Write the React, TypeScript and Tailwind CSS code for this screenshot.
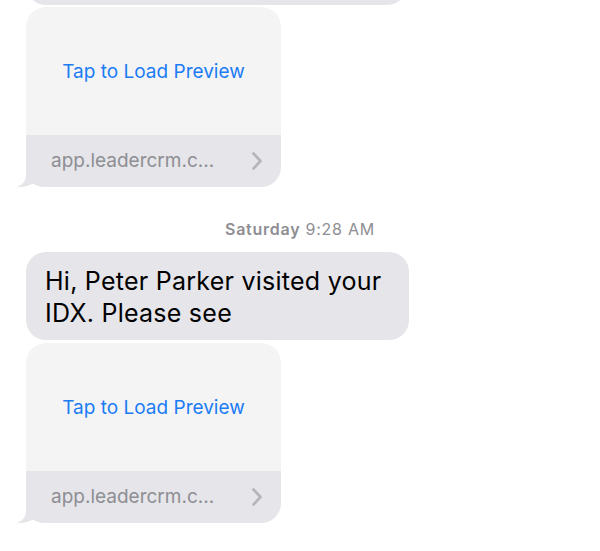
import React from "react";

const Chevron = () => (
  <svg width="12" height="20" viewBox="0 0 12 20" fill="none">
    <path
      d="M2.5 2.5 L9.5 10 L2.5 17.5"
      stroke="#b4b4b9"
      strokeWidth="2.6"
      strokeLinecap="round"
      strokeLinejoin="round"
    />
  </svg>
);

const Tail = () => (
  <svg
    className="absolute left-[-9px] bottom-0"
    width="30"
    height="20"
    viewBox="0 0 30 20"
  >
    <path
      d="M9 0 L9 9 C9 14 5 18 0 20 C6 20.5 11 19 16 16.5 C19 19 24 20 30 20 L30 0 Z"
      fill="#e5e5ea"
    />
  </svg>
);

const PreviewCard = ({ tail }: { tail?: boolean }) => (
  <div className="relative w-[255px]">
    <div className="w-full overflow-hidden rounded-[20px]">
      <div className="flex h-[128px] items-center justify-center bg-[#f4f4f5] pt-[2px] text-[19px] text-[#1b7cf4]">
        Tap to Load Preview
      </div>
      <div className="flex h-[52px] items-center justify-between bg-[#e5e5ea] pl-[25px] pr-[18px]">
        <span className="text-[19px] text-[#8e8e93]">app.leadercrm.c...</span>
        <Chevron />
      </div>
    </div>
    {tail && <Tail />}
  </div>
);

const App = () => {
  return (
    <div className="h-[551px] w-[600px] overflow-hidden bg-white font-['Inter',sans-serif]">
      <div className="pl-[26px]">
        <div className="-mt-[35px] h-[40px] w-[381px] rounded-[20px] bg-[#e5e5ea]" />
        <div className="mt-[2px]">
          <PreviewCard tail />
        </div>
        <div className="mt-[32px] -ml-[26px] text-center text-[16px] leading-[20px] tracking-[0.75px] text-[#8e8e93]">
          <span className="font-semibold">Saturday</span> 9:28 AM
        </div>
        <div className="mt-[13px] w-[383px] rounded-[20px] bg-[#e5e5ea] pl-[19px] pt-[13px] pb-[11px] text-[25px] leading-[32px] tracking-[0.25px] text-black">
          Hi, Peter Parker visited your
          <br />
          IDX. Please see
        </div>
        <div className="mt-[3px]">
          <PreviewCard tail />
        </div>
      </div>
    </div>
  );
};

export default App;
